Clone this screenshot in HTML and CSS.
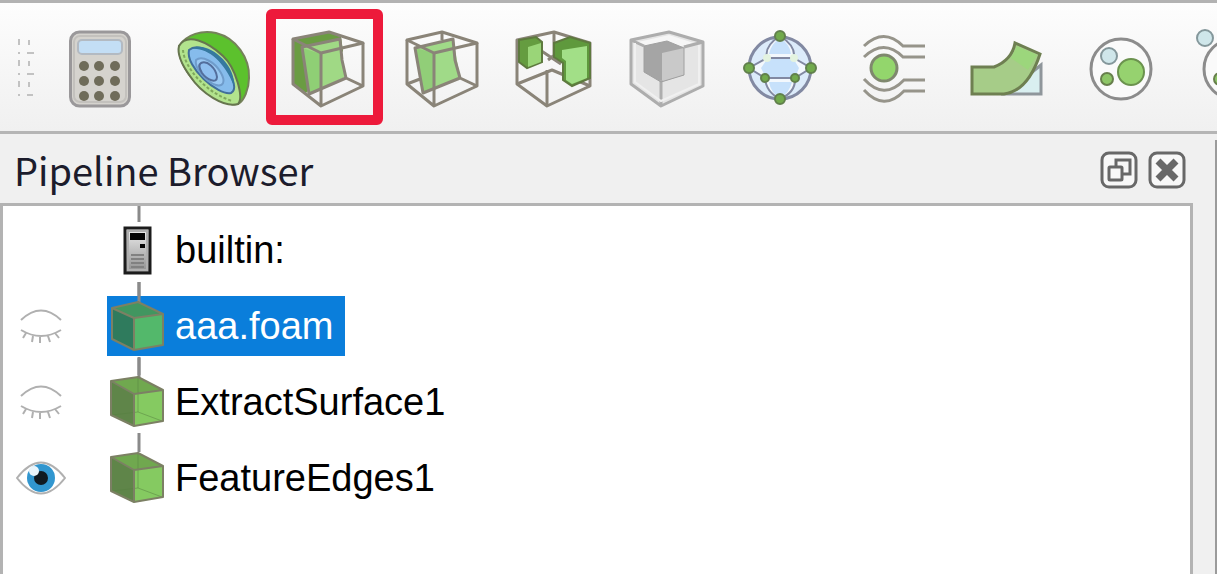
FILE: index.html
```html
<!DOCTYPE html>
<html lang="en">
<head>
    <meta charset="UTF-8">
    <meta name="viewport" content="width=device-width, initial-scale=1.0">
    <title>Pipeline Browser</title>
    <link rel="stylesheet" href="styles.css">
</head>
<body>
    <div class="toolbar">
        <svg class="handle" viewBox="17 28 18 80">
            <path d="M19 39v6M19 52v2M19 60v6M19 73v2M19 81v6M19 94v2M29 40v5M27 53h7M29 61v5M27 74h7M29 82v5M27 95h6"/>
        </svg>
        <div class="filters">
            <button class="tool" type="button" aria-label="Calculator">
                <svg viewBox="61 28 80 80">
                    <rect x="70.500" y="32" width="59" height="74" rx="9" fill="#d5d3ce" stroke="#9a989a" stroke-width="3"/>
                    <rect x="74" y="36" width="52" height="66" rx="6" fill="none" stroke="#c3c1bd" stroke-width="2"/>
                    <rect x="78" y="40" width="44" height="14" rx="4" fill="#c3def5" stroke="#b3bac2" stroke-width="2"/>
                    <g fill="#6f6c5a">
                        <circle cx="84" cy="66" r="5"/><circle cx="99" cy="66" r="5"/><circle cx="115" cy="66" r="5"/>
                        <circle cx="84" cy="81" r="5"/><circle cx="99" cy="81" r="5"/><circle cx="115" cy="81" r="5"/>
                        <circle cx="84" cy="96" r="5"/><circle cx="99" cy="96" r="5"/><circle cx="115" cy="96" r="5"/>
                    </g>
                </svg>
            </button>
            <button class="tool" type="button" aria-label="Contour">
                <svg viewBox="174 28 80 80">
                    <path d="M179 46C187 34 202 30 216 33C236 38 250 58 249 78C249 89 244 101 238 104C221 108 178 78 179 46Z" fill="#5cc12d" stroke="#75825a" stroke-width="2"/>
                    <path d="M179 46C187 32 208 42 223 56C236 68 244 98 238 104C224 108 201 93 190 76C182 65 177 54 179 46Z" fill="#b2e38d" stroke="#66754e" stroke-width="2"/>
                    <path d="M183 50C184 66 204 92 232 101" fill="none" stroke="#7fa85c" stroke-width="2" stroke-dasharray="3 2"/>
                    <path d="M189 50C198 42 216 53 226 67C234 79 237 90 231 93C218 96 185 67 189 50Z" fill="#86bcec" stroke="#416f99" stroke-width="2"/>
                    <path d="M191 49C207 47 224 61 234 86C236 66 212 44 196 47Z" fill="#35799f"/>
                    <path d="M196 60C202 55 215 62 221 73C226 82 223 87 216 85C206 82 194 68 196 60Z" fill="#9bc9f3" stroke="#6f9ccb" stroke-width="2"/>
                    <path d="M201 63C207 60 216 68 217 77C217 84 207 80 202 73C199 68 198 65 201 63Z" fill="#8fbff0" stroke="#536e9c" stroke-width="2"/>
                </svg>
            </button>
            <button class="tool tool-marked" type="button" aria-label="Clip">
                <svg viewBox="287 28 80 80">
                    <path d="M293 40L328 32L341 37L343 51L306 93L293 84Z" fill="#6a9c42"/>
                    <path d="M302 48L340 39L345 77L309 94Z" fill="#a0d985"/>
                    <path d="M302 48L321 54L321 88L309 94Z" fill="#8fcf75"/>
                    <g class="wire">
                        <path d="M293 39L329 32L363 43L321 53Z"/>
                        <path d="M293 39V84L321 106L363 86V43M321 53V106"/>
                        <path d="M302 47L340 39L342 60L346 78L309 94ZM346 78L363 86"/>
                    </g>
                </svg>
            </button>
            <button class="tool" type="button" aria-label="Slice">
                <svg viewBox="400 28 80 80">
                    <path d="M415 48L453 38L460 78L423 93Z" fill="#a0da88"/>
                    <path d="M415 48L434 53V88L423 93Z" fill="#91ce78"/>
                    <g class="wire">
                        <path d="M407 40L442 32L477 43L434 53Z"/>
                        <path d="M407 40V84L434 106L477 86V43M434 53V106"/>
                        <path d="M415 48L453 39L455 60L460 78L423 93ZM407 84L420 79M460 78L477 86M442 32V40"/>
                    </g>
                </svg>
            </button>
            <button class="tool" type="button" aria-label="Threshold">
                <svg viewBox="513 28 80 80">
                    <g class="wire">
                        <path d="M517 40L554 32L590 43V86L547 106L517 84Z"/>
                        <path d="M517 84L552 70L590 86M547 70V106M554 32V55M540 50L561 64M548 60L561 50"/>
                    </g>
                    <path d="M519 40L536 37L542 42V62L527 68L519 62Z" fill="#659c40" stroke="#5e793f" stroke-width="2"/>
                    <path d="M528 47L541 43V62L528 67Z" fill="#9ad578"/>
                    <path d="M554 43L570 37L590 43V78L572 86L563 80V63L554 57Z" fill="#5f993d" stroke="#5e793f" stroke-width="2"/>
                    <path d="M562 50L587 46V78L572 84L566 80V61L562 58Z" fill="#a2df87"/>
                </svg>
            </button>
            <button class="tool" type="button" aria-label="Extract Subset">
                <svg viewBox="626 28 80 80">
                    <path d="M631 40L669 32L703 42V86L661 106L631 84Z" fill="#e5e5e5"/>
                    <path d="M638 42L669 35L694 43L661 51Z" fill="#f6f6f6"/>
                    <path d="M644 46L667 41L684 48V75L661 82L644 72Z" fill="#a5a5a5"/>
                    <path d="M662 53L684 48V75L662 82Z" fill="#c9c9c9"/>
                    <path d="M631 40L669 32L703 42V86L661 106L631 84ZM631 40L644 46M703 42L684 47M661 80V106" fill="none" stroke="#adadad" stroke-width="3" stroke-linejoin="round"/>
                    <path d="M635 43V82L661 101L699 84V45" fill="none" stroke="#f0f0f0" stroke-width="2"/>
                    <path d="M644 46L667 41L684 48V75L661 82L644 72Z" fill="none" stroke="#a0a0a0" stroke-width="1"/>
                </svg>
            </button>
            <button class="tool" type="button" aria-label="Glyph">
                <svg viewBox="739 28 80 80">
                    <circle cx="780" cy="68" r="31" fill="#dcebfa" stroke="#8289a2" stroke-width="3"/>
                    <path d="M780 36Q764 46 767 58L749 68L765 78Q766 92 780 99Q796 92 795 78L811 68L794 58Q796 46 780 36Z" fill="#f3f8fd" stroke="#8289a2" stroke-width="2"/>
                    <path d="M768 58H793L799 68L795 78H766L761 68ZM780 38Q790 44 791 54H769Q771 44 780 38ZM769 82H792Q789 94 780 97Q771 94 769 82Z" fill="#c7e1fb"/>
                    <path d="M767 58H794M765 78H795" stroke="#8289a2" stroke-width="2"/>
                    <g fill="#71aa4c" stroke="#61804c" stroke-width="2">
                        <circle cx="780" cy="36" r="5"/><circle cx="749" cy="68" r="5"/><circle cx="811" cy="68" r="5"/>
                        <circle cx="780" cy="99" r="5"/><circle cx="765" cy="78" r="4"/><circle cx="795" cy="78" r="4"/>
                    </g>
                    <circle cx="767" cy="58" r="4" fill="#e4f3e0"/><circle cx="794" cy="58" r="4" fill="#e4f3e0"/>
                </svg>
            </button>
            <button class="tool" type="button" aria-label="Stream Tracer">
                <svg viewBox="852 28 80 80">
                    <circle cx="884" cy="68" r="13" fill="#93d66c" stroke="#7f886e" stroke-width="3"/>
                    <path d="M864 46Q884 27 903 46H925M864 57Q884 38 903 57H925M864 79Q884 101 904 80H925M864 90Q884 112 904 91H925" fill="none" stroke="#96948a" stroke-width="3"/>
                </svg>
            </button>
            <button class="tool" type="button" aria-label="Warp By Vector">
                <svg viewBox="965 28 80 80">
                    <path d="M1005 94L1041 65V94Z" fill="#d9eff0" stroke="#8f969b" stroke-width="3"/>
                    <path d="M972 67H994Q1012 60 1015 43L1040 54Q1028 91 1004 94H972Z" fill="#a6cc88" stroke="#6e7f51" stroke-width="3"/>
                    <path d="M1017 46L1037 55L1028 70L1011 58Z" fill="#9cd67c"/>
                </svg>
            </button>
            <button class="tool" type="button" aria-label="Group Datasets">
                <svg viewBox="1078 28 80 80">
                    <circle cx="1121" cy="69" r="30" fill="#fafafa" stroke="#8c8c8c" stroke-width="3"/>
                    <circle cx="1109" cy="56" r="8" fill="#cfe6ea" stroke="#84979b" stroke-width="2"/>
                    <circle cx="1131" cy="72" r="13" fill="#96d26f" stroke="#6b924e" stroke-width="2"/>
                    <circle cx="1107" cy="79" r="6" fill="#8dc667" stroke="#677f4c" stroke-width="2"/>
                </svg>
            </button>
            <button class="tool" type="button" aria-label="Extract Group">
                <svg viewBox="1191 28 80 80">
                    <circle cx="1234" cy="69" r="30" fill="#fafafa" stroke="#8c8c8c" stroke-width="3"/>
                    <circle cx="1205" cy="38" r="8" fill="#cfe6ea" stroke="#84979b" stroke-width="2"/>
                    <circle cx="1220" cy="79" r="6" fill="#8dc667" stroke="#677f4c" stroke-width="2"/>
                </svg>
            </button>
        </div>
    </div>

    <div class="workspace">
        <section class="dock">
            <header class="dock-title">
                <h1>Pipeline Browser</h1>
                <button class="dock-button" type="button" aria-label="Float">
                    <svg viewBox="1100 151 38 38">
                        <rect x="1102" y="153" width="34" height="34" rx="7"/>
                        <path d="M1116 166V160H1130V174H1123"/>
                        <rect x="1109" y="167" width="13" height="13" rx="1"/>
                    </svg>
                </button>
                <button class="dock-button" type="button" aria-label="Close">
                    <svg viewBox="1148 151 38 38">
                        <rect x="1150" y="153" width="34" height="34" rx="7"/>
                        <path class="cross" d="M1158 161L1176 179M1176 161L1158 179"/>
                    </svg>
                </button>
            </header>
            <ul class="tree">
                <li class="row">
                    <span class="eye"></span>
                    <button class="item" type="button">
                        <svg viewBox="107 220 60 60">
                            <defs>
                                <linearGradient id="server" x1="0" y1="0" x2="0" y2="1">
                                    <stop offset="0" stop-color="#f0f0f0"/>
                                    <stop offset="1" stop-color="#8e8e8e"/>
                                </linearGradient>
                            </defs>
                            <path class="branch" d="M139 206V222M139 282V300"/>
                            <rect x="125" y="228" width="25" height="45" fill="url(#server)" stroke="#1c1c1c" stroke-width="3"/>
                            <rect x="128" y="231" width="19" height="39" fill="none" stroke="#b0b0b0" stroke-width="2"/>
                            <path d="M130 233h15v7h-15zM140 244h5v4h-5z" fill="#050505"/>
                            <path d="M131 255h13M131 259h13M131 263h13M131 267h13" stroke="#818181" stroke-width="2"/>
                        </svg>
                        <span>builtin:</span>
                    </button>
                </li>
                <li class="row">
                    <button class="eye" type="button" aria-label="Show aaa.foam">
                        <svg viewBox="16 304 50 44">
                            <path class="lid" d="M21 320Q41 301 61 320M21 330Q41 342 61 330M26 333l-3 5M33 336l-1 6M40 337v6M48 336l2 6M55 333l4 5"/>
                        </svg>
                    </button>
                    <button class="item item-selected" type="button">
                        <svg viewBox="107 296 60 60">
                            <path class="branch" d="M139 282V303M139 357V375"/>
                            <path d="M112 308L138 302L163 314V345L134 350L112 339Z" fill="#419660"/>
                            <path d="M112 308L134 318V350L112 339Z" fill="#2f7b5d"/>
                            <path d="M134 318L163 314V345L134 350Z" fill="#53b86b"/>
                            <path class="edges" d="M112 308L138 302L163 314V345L134 350L112 339ZM112 308L134 318L163 314M134 318V350"/>
                        </svg>
                        <span>aaa.foam</span>
                    </button>
                </li>
                <li class="row">
                    <button class="eye" type="button" aria-label="Show ExtractSurface1">
                        <svg viewBox="16 304 50 44">
                            <path class="lid" d="M21 320Q41 301 61 320M21 330Q41 342 61 330M26 333l-3 5M33 336l-1 6M40 337v6M48 336l2 6M55 333l4 5"/>
                        </svg>
                    </button>
                    <button class="item" type="button">
                        <svg viewBox="107 372 60 60">
                            <path class="branch" d="M139 358V377M139 433V452"/>
                            <path d="M111 381L138 377L163 390V421L134 426L111 415Z" fill="#70a84f"/>
                            <path d="M111 381L134 394V426L111 415Z" fill="#5f8549"/>
                            <path d="M134 394L163 390V421L134 426Z" fill="#85ca61"/>
                            <path d="M138 378V412L112 415M138 412L162 421" fill="none" stroke="#557f40" stroke-opacity="0.500"/>
                            <path class="edges" d="M111 381L138 377L163 390V421L134 426L111 415ZM111 381L134 394L163 390M134 394V426"/>
                        </svg>
                        <span>ExtractSurface1</span>
                    </button>
                </li>
                <li class="row">
                    <button class="eye" type="button" aria-label="Hide FeatureEdges1">
                        <svg viewBox="16 456 50 44">
                            <path d="M17 478Q41 447 65 478Q41 509 17 478Z" fill="#fff" stroke="#b0b0b0" stroke-width="2"/>
                            <circle cx="41" cy="478" r="14" fill="#3196cf"/>
                            <circle cx="41" cy="478" r="7" fill="#101a21"/>
                            <circle cx="34" cy="471" r="5" fill="#e9f5fc"/>
                        </svg>
                    </button>
                    <button class="item" type="button">
                        <svg viewBox="107 372 60 60">
                            <path d="M111 381L138 377L163 390V421L134 426L111 415Z" fill="#70a84f"/>
                            <path d="M111 381L134 394V426L111 415Z" fill="#5f8549"/>
                            <path d="M134 394L163 390V421L134 426Z" fill="#85ca61"/>
                            <path d="M138 378V412L112 415M138 412L162 421" fill="none" stroke="#557f40" stroke-opacity="0.500"/>
                            <path class="edges" d="M111 381L138 377L163 390V421L134 426L111 415ZM111 381L134 394L163 390M134 394V426"/>
                        </svg>
                        <span>FeatureEdges1</span>
                    </button>
                </li>
            </ul>
        </section>
        <div class="view-edge"></div>
    </div>
</body>
</html>
```
FILE: styles.css
```css
body {
    margin: 0;
    min-height: 100vh;
    display: flex;
    flex-direction: column;
    background-color: #f0f0f0;
    color: #000;
    font-family: "Liberation Sans", Arial, sans-serif;
    font-size: 38px;
    line-height: 60px;
    overflow: hidden;
}
button {
    border: none;
    padding: 0;
    background: none;
    color: inherit;
    font: inherit;
}
svg {
    display: block;
    flex: none;
}

/* toolbar */
.toolbar {
    display: flex;
    gap: 26px;
    padding: 25px 0 23px 17px;
    border-top: 3px solid #b2b2b2;
    border-bottom: 3px solid #b5b5b5;
    background: linear-gradient(#fdfdfd, #f0f0f0);
    overflow: hidden;
}
.handle {
    width: 18px;
    height: 80px;
    fill: none;
    stroke: #c2c2c2;
    stroke-width: 2;
}
.filters {
    display: flex;
    gap: 33px;
}
.tool {
    flex: none;
}
.tool svg {
    width: 80px;
    height: 80px;
}
.tool-marked {
    position: relative;
}
.tool-marked::after {
    content: "";
    position: absolute;
    top: -19px;
    left: -21px;
    width: 97px;
    height: 96px;
    border: 10px solid #ed1a3b;
    border-radius: 6px;
}
.wire {
    fill: none;
    stroke: #8a8478;
    stroke-width: 3;
    stroke-linejoin: round;
}

/* pipeline dock */
.workspace {
    display: flex;
    flex: 1;
    gap: 22px;
}
.dock {
    display: flex;
    flex: 1;
    flex-direction: column;
}
.dock-title {
    display: flex;
    align-items: center;
    gap: 10px;
    padding: 6px 7px 3px 14px;
}
.dock-title h1 {
    flex: 1;
    margin: 0;
    font-family: "Noto Sans CJK JP", sans-serif;
    font-size: 38px;
    font-weight: normal;
    line-height: 60px;
    color: #1c1c2c;
}
.dock-button svg {
    width: 38px;
    height: 38px;
    fill: #f8f8f8;
    stroke: #686868;
    stroke-width: 3;
}
.dock-button .cross {
    stroke-width: 7;
}
.tree {
    flex: 1;
    margin: 0;
    padding: 6px 0 0;
    border: 3px solid #b3b3b3;
    border-bottom: none;
    background-color: #fff;
    list-style: none;
}
.row {
    display: flex;
    align-items: center;
    gap: 41px;
    height: 76px;
    padding-left: 13px;
}
.eye {
    width: 50px;
}
.eye svg {
    width: 50px;
    height: 44px;
}
.lid {
    fill: none;
    stroke: #b0b0b0;
    stroke-width: 2;
}
.item {
    display: flex;
    align-items: center;
    gap: 8px;
    padding-right: 12px;
}
.item svg {
    width: 60px;
    height: 60px;
    overflow: visible;
}
.item-selected {
    background-color: #0a7edb;
    color: #fff;
}
.branch {
    fill: none;
    stroke: #8a8a8a;
    stroke-width: 3;
}
.edges {
    fill: none;
    stroke: #7c8064;
    stroke-width: 2;
    stroke-linejoin: round;
}
.view-edge {
    width: 2px;
    margin-top: 6px;
    background-color: #9b9b9b;
}
```
